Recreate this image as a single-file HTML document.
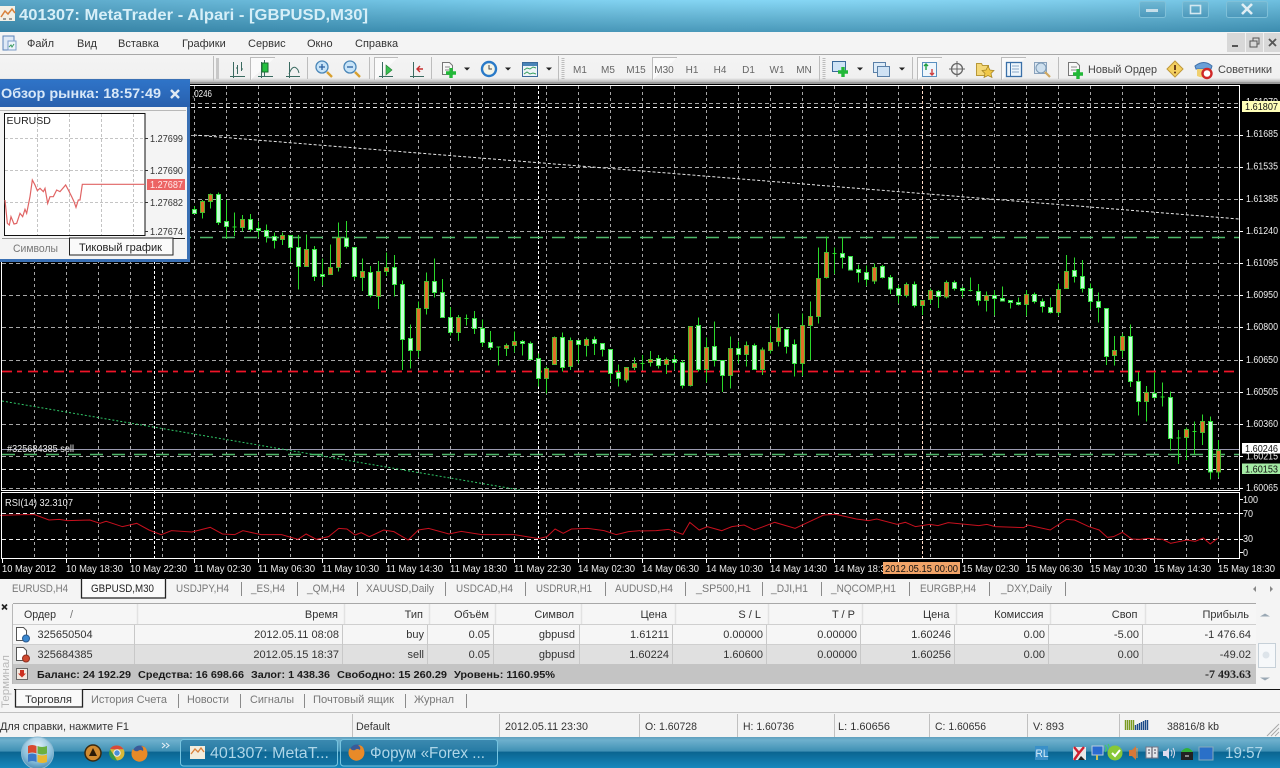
<!DOCTYPE html>
<html lang="ru"><head><meta charset="utf-8"><title>401307: MetaTrader - Alpari - [GBPUSD,M30]</title>
<style>
html,body{margin:0;padding:0;background:#000;width:1280px;height:768px;overflow:hidden}
svg{display:block}
text{font-family:"Liberation Sans","DejaVu Sans",sans-serif;font-size:11px;fill:#333}
.w text,text.w{fill:#eee;font-size:10px}
.g{fill:#777}
.d{fill:#666;font-size:10px}
.b{font-weight:bold;fill:#1a1a1a;font-size:10.5px}
.r{text-anchor:end}
.v{vector-effect:non-scaling-stroke}
.c path{vector-effect:non-scaling-stroke;shape-rendering:crispEdges}
.wk{fill:none;stroke:#2ad82a}
.be{fill:#c6ffd6;stroke:#34e040}
.bu{fill:#e07028;stroke:#50b830}
.ic{fill:none;stroke:#3a6a60;stroke-width:1}
</style></head><body>
<svg width="1280" height="768" viewBox="0 0 1280 768" xmlns="http://www.w3.org/2000/svg">
<defs>
<linearGradient id="tb" x1="0" y1="0" x2="0" y2="1"><stop offset="0" stop-color="#7fd4f4"/><stop offset=".45" stop-color="#63b6d6"/><stop offset="1" stop-color="#3f93b6"/></linearGradient>
<linearGradient id="tbh" x1="0" y1="0" x2="1" y2="0"><stop offset="0" stop-color="#2f6f90" stop-opacity=".45"/><stop offset=".35" stop-color="#2f6f90" stop-opacity=".12"/><stop offset=".6" stop-color="#fff" stop-opacity=".05"/><stop offset="1" stop-color="#2f6f90" stop-opacity=".2"/></linearGradient>
<linearGradient id="wb" x1="0" y1="0" x2="0" y2="1"><stop offset="0" stop-color="#6fb8d4"/><stop offset="1" stop-color="#4c98bb"/></linearGradient>
<linearGradient id="tk" x1="0" y1="0" x2="0" y2="1"><stop offset="0" stop-color="#5f9fbd"/><stop offset=".1" stop-color="#6eb0cd"/><stop offset=".46" stop-color="#3f90b4"/><stop offset=".48" stop-color="#0a6490"/><stop offset="1" stop-color="#1688bd"/></linearGradient>
<linearGradient id="pt" x1="0" y1="0" x2="0" y2="1"><stop offset="0" stop-color="#2f74c8"/><stop offset="1" stop-color="#2860ae"/></linearGradient>
<linearGradient id="tg" x1="0" y1="0" x2="0" y2="1"><stop offset="0" stop-color="#f4f4f4"/><stop offset=".85" stop-color="#f0f0f0"/><stop offset="1" stop-color="#b8b8b8"/></linearGradient>
<radialGradient id="orb" cx=".5" cy=".3" r=".75"><stop offset="0" stop-color="#e4f2fa"/><stop offset=".65" stop-color="#86bcd8"/><stop offset="1" stop-color="#3a80ac"/></radialGradient>
</defs>

<!-- chart area -->
<rect x="0" y="84" width="1280" height="495" fill="#000"/>
<path fill="none" stroke="#a6a6a6" stroke-dasharray="3 3" shape-rendering="crispEdges" d="M34.5 86V558M66.5 86V558M98.5 86V558M130.5 86V558M162.5 86V558M194.5 86V558M226.5 86V558M258.5 86V558M290.5 86V558M322.5 86V558M354.5 86V558M386.5 86V558M418.5 86V558M450.5 86V558M482.5 86V558M514.5 86V558M546.5 86V558M578.5 86V558M610.5 86V558M642.5 86V558M674.5 86V558M706.5 86V558M738.5 86V558M770.5 86V558M802.5 86V558M834.5 86V558M866.5 86V558M898.5 86V558M930.5 86V558M962.5 86V558M994.5 86V558M1026.5 86V558M1058.5 86V558M1090.5 86V558M1122.5 86V558M1154.5 86V558M1186.5 86V558M1218.5 86V558"/>
<path fill="none" stroke="#a6a6a6" stroke-dasharray="4 3" shape-rendering="crispEdges" d="M2 103.5H1239M2 135.5H1239M2 167.5H1239M2 199.5H1239M2 231.5H1239M2 263.5H1239M2 295.5H1239M2 327.5H1239M2 360.5H1239M2 392.5H1239M2 424.5H1239M2 456.5H1239M2 488.5H1239"/>
<path fill="none" stroke="#fff" stroke-dasharray="3 2" shape-rendering="crispEdges" d="M154.5 86V558M538.5 86V558"/>
<path fill="none" stroke="#ffdcc8" stroke-dasharray="3 2" shape-rendering="crispEdges" d="M922.5 86V558"/>
<path fill="none" stroke="#eee" stroke-dasharray="4 3" shape-rendering="crispEdges" d="M2 107.5H1239M2 469.5H1239M2 513.5H1239M2 539.5H1239"/>
<path fill="none" stroke="#4fb86a" stroke-width="1.6" stroke-dasharray="13 9" d="M2 237.5H1239M2 454.5H1239"/>
<path fill="none" stroke="#f01428" stroke-width="1.8" stroke-dasharray="10 5 5 6" d="M2 371.5H1239"/>
<path fill="none" stroke="#9a9ab0" shape-rendering="crispEdges" d="M2 449.5H1239"/>
<path fill="none" stroke="#e8e8e8" stroke-dasharray="3 2" d="M194 135L1239 219"/>
<path fill="none" stroke="#30c868" stroke-dasharray="2 2" d="M2 401L520 490"/>

<!-- candles A -->
<g class="c" transform="matrix(1 0 0 .33333 0 180)">
<path class="wk" d="M194.5 78V100M202.5 60V116M210.5 40V86M218.5 37V135M226.5 60V175M234.5 97V168M232.5 141h4M242.5 105V155M250.5 102V155M258.5 125V172M266.5 133V188M274.5 158V206M282.5 158V195M290.5 165V245M298.5 165V328M306.5 163V260M314.5 198V303M322.5 235V317M330.5 193V284M338.5 128V275M346.5 123V205M354.5 202V298M362.5 235V333M370.5 258V352M378.5 243V387M386.5 218V288M394.5 225V350M402.5 302V570M410.5 433V565M418.5 365V532M426.5 277V404M434.5 235V352M442.5 297V412M450.5 381V467M458.5 405V483M466.5 403V436M464.5 415h4M474.5 393V462M482.5 418V500M490.5 453V510M498.5 500V557M496.5 501h4M506.5 490V528M514.5 455V518M522.5 480V527M530.5 485V540M538.5 520V620"/>
<path class="be" d="M192.5 88h4V100h-4zM216.5 44h4V128h-4zM224.5 125h4V140h-4zM248.5 118h4V149h-4zM256.5 146h4V152h-4zM264.5 152h4V170h-4zM272.5 170h4V181h-4zM288.5 166h4V203h-4zM296.5 203h4V259h-4zM312.5 208h4V289h-4zM320.5 284h4V289h-4zM344.5 174h4V200h-4zM352.5 203h4V289h-4zM368.5 277h4V347h-4zM392.5 263h4V313h-4zM400.5 314h4V478h-4zM408.5 475h4V511h-4zM432.5 304h4V338h-4zM440.5 337h4V412h-4zM448.5 412h4V457h-4zM472.5 416h4V445h-4zM480.5 445h4V487h-4zM488.5 488h4V502h-4zM520.5 484h4V490h-4zM528.5 490h4V539h-4zM536.5 535h4V595h-4z"/>
<path class="bu" d="M200.5 64h4V97h-4zM208.5 44h4V65h-4zM240.5 118h4V143h-4zM280.5 166h4V178h-4zM304.5 209h4V260h-4zM328.5 263h4V284h-4zM336.5 172h4V263h-4zM360.5 275h4V292h-4zM376.5 274h4V349h-4zM384.5 262h4V275h-4zM416.5 385h4V511h-4zM424.5 304h4V386h-4zM456.5 412h4V457h-4zM504.5 496h4V506h-4zM512.5 484h4V496h-4z"/>
</g>
<!-- candles B -->
<g class="c" transform="matrix(1 0 0 .33333 0 220)">
<path class="wk" d="M546.5 440V520M554.5 350V433M562.5 337V455M570.5 352V450M578.5 360V430M586.5 352V410M594.5 350V405M602.5 370V410M610.5 388V485M618.5 433V500M626.5 441V488M634.5 412V450M642.5 405V450M640.5 430h4M650.5 393V440M658.5 405V445M666.5 412V462M674.5 405V450M682.5 420V505M690.5 318V500M698.5 292V455M706.5 352V487M714.5 304V440M722.5 421V516M730.5 349V505M738.5 365V430M746.5 365V440M754.5 370V450M762.5 382V465M770.5 316V400M778.5 280V380M786.5 327V400M794.5 358V470M802.5 280V468M810.5 244V420M818.5 82V310M826.5 50V175M834.5 82V162M832.5 101h4M842.5 52V145M850.5 108V152M858.5 133V188M866.5 136V198M874.5 130V192"/>
<path class="be" d="M560.5 352h4V443h-4zM576.5 361h4V374h-4zM592.5 358h4V371h-4zM600.5 371h4V388h-4zM608.5 389h4V460h-4zM616.5 457h4V476h-4zM656.5 415h4V437h-4zM672.5 418h4V428h-4zM680.5 428h4V497h-4zM696.5 317h4V449h-4zM712.5 379h4V421h-4zM720.5 422h4V466h-4zM736.5 386h4V403h-4zM752.5 376h4V449h-4zM784.5 328h4V380h-4zM792.5 374h4V431h-4zM840.5 100h4V112h-4zM848.5 110h4V150h-4zM856.5 148h4V158h-4zM864.5 157h4V179h-4z"/>
<path class="bu" d="M544.5 445h4V476h-4zM552.5 352h4V433h-4zM568.5 361h4V440h-4zM584.5 358h4V377h-4zM624.5 442h4V480h-4zM632.5 430h4V443h-4zM648.5 418h4V428h-4zM664.5 418h4V433h-4zM688.5 320h4V497h-4zM704.5 382h4V449h-4zM728.5 385h4V467h-4zM744.5 376h4V403h-4zM760.5 390h4V449h-4zM768.5 367h4V391h-4zM776.5 323h4V365h-4zM800.5 316h4V431h-4zM808.5 289h4V317h-4zM816.5 175h4V289h-4zM824.5 97h4V173h-4zM872.5 142h4V183h-4z"/>
</g>
<!-- candles C -->
<g class="c" transform="matrix(1 0 0 .33333 0 240)">
<path class="wk" d="M882.5 75V115M890.5 105V162M898.5 135V190M906.5 128V172M914.5 125V203M922.5 180V225M930.5 145V192M938.5 150V204M946.5 122V175M954.5 122V152M962.5 140V172M970.5 112V155M968.5 152h4M978.5 132V197M986.5 155V215M994.5 150V226M1002.5 140V185M1010.5 180V205M1018.5 172V197M1026.5 150V228M1034.5 158V190M1042.5 176V218M1050.5 172V220M1058.5 130V228M1066.5 45V147M1074.5 52V128M1082.5 60V158M1090.5 130V208M1098.5 158V248M1106.5 205V375M1114.5 288V377M1122.5 280V352M1130.5 254V441M1138.5 396V527M1146.5 438V545M1154.5 398V476M1162.5 428V500M1160.5 471h4M1170.5 455V631M1178.5 570V672M1176.5 594h4M1186.5 563V660M1194.5 545V643M1192.5 574h4M1202.5 523V615M1210.5 530V718M1218.5 600V712"/>
<path class="be" d="M880.5 80h4V113h-4zM888.5 112h4V147h-4zM896.5 145h4V167h-4zM912.5 133h4V197h-4zM936.5 155h4V170h-4zM952.5 127h4V146h-4zM960.5 146h4V152h-4zM976.5 155h4V182h-4zM992.5 167h4V176h-4zM1000.5 175h4V183h-4zM1008.5 182h4V187h-4zM1016.5 187h4V193h-4zM1032.5 163h4V185h-4zM1040.5 185h4V199h-4zM1048.5 203h4V218h-4zM1072.5 91h4V109h-4zM1080.5 110h4V145h-4zM1088.5 146h4V185h-4zM1096.5 184h4V203h-4zM1104.5 205h4V349h-4zM1128.5 289h4V425h-4zM1136.5 425h4V485h-4zM1152.5 460h4V472h-4zM1168.5 472h4V596h-4zM1208.5 545h4V696h-4z"/>
<path class="bu" d="M904.5 133h4V167h-4zM920.5 181h4V197h-4zM928.5 151h4V178h-4zM944.5 127h4V171h-4zM984.5 167h4V182h-4zM1024.5 163h4V193h-4zM1056.5 148h4V218h-4zM1064.5 94h4V146h-4zM1112.5 331h4V347h-4zM1120.5 289h4V331h-4zM1144.5 458h4V485h-4zM1184.5 568h4V592h-4zM1200.5 545h4V577h-4zM1216.5 632h4V696h-4z"/>
</g>

<!-- RSI line -->
<g fill="none" stroke="#c8101e">
<polyline class="v" transform="matrix(.40816 0 0 .33333 0 440)" points="0,226 60,224 85,224 120,240 145,238 165,242 220,240 245,250 260,244 300,260 335,250 365,270 395,284 420,272 470,276 515,262 545,282 575,284 595,272 640,284 690,284 730,298 750,282 775,298 805,290 830,265 850,267 870,285 885,278 905,290 940,270 965,275 1000,300 1025,270 1050,265 1100,282 1130,274 1180,284 1260,284 1320,296 1340,290 1360,267 1380,280 1400,267 1440,265 1480,272 1510,284 1540,275 1568,272"/>
<polyline class="v" transform="matrix(.40816 0 0 .33333 640 480)" points="0,153 40,152 70,148 105,163 122,127 145,150 165,140 200,152 225,140 255,135 280,150 330,127 380,145 415,125 450,105 480,103 530,117 560,122 580,117 630,133 650,127 675,140 710,133 730,137 755,128 830,137 850,133 870,140 940,143 950,135 1005,150 1045,118 1065,120 1100,140 1125,150 1145,172 1160,170 1182,157 1205,177 1225,178 1245,175 1280,178 1300,190 1340,180 1360,184 1380,174 1397,192 1415,175"/>
</g>

<!-- frames -->
<g fill="none" stroke="#fff" shape-rendering="crispEdges">
<rect x="1.5" y="85.5" width="1238" height="405"/>
<rect x="1.5" y="492.5" width="1238" height="66"/>
<path d="M2.5 559v4M66.5 559v4M130.5 559v4M194.5 559v4M258.5 559v4M322.5 559v4M386.5 559v4M450.5 559v4M514.5 559v4M578.5 559v4M642.5 559v4M706.5 559v4M770.5 559v4M834.5 559v4M898.5 559v4M962.5 559v4M1026.5 559v4M1090.5 559v4M1154.5 559v4M1218.5 559v4M1240 135.5h3M1240 167.5h3M1240 199.5h3M1240 231.5h3M1240 263.5h3M1240 295.5h3M1240 327.5h3M1240 360.5h3M1240 392.5h3M1240 424.5h3M1240 456.5h3M1240 488.5h3M1240 499.5h3M1240 513.5h3M1240 539.5h3M1240 552.5h3"/>
</g>

<!-- chart labels -->
<g class="w">
<text x="192" y="97" textLength="20" lengthAdjust="spacingAndGlyphs">,0246</text>
<text x="7" y="452" textLength="67" lengthAdjust="spacingAndGlyphs">#325684385 sell</text>
<text x="5" y="506" textLength="68" lengthAdjust="spacingAndGlyphs">RSI(14) 32.3107</text>
<text x="1246" y="105" textLength="32" lengthAdjust="spacingAndGlyphs">1.61979</text>
<text x="1246" y="137" textLength="32" lengthAdjust="spacingAndGlyphs">1.61685</text>
<text x="1246" y="169.5" textLength="32" lengthAdjust="spacingAndGlyphs">1.61535</text>
<text x="1246" y="202" textLength="32" lengthAdjust="spacingAndGlyphs">1.61385</text>
<text x="1246" y="234" textLength="32" lengthAdjust="spacingAndGlyphs">1.61240</text>
<text x="1246" y="266" textLength="32" lengthAdjust="spacingAndGlyphs">1.61095</text>
<text x="1246" y="298" textLength="32" lengthAdjust="spacingAndGlyphs">1.60950</text>
<text x="1246" y="330" textLength="32" lengthAdjust="spacingAndGlyphs">1.60800</text>
<text x="1246" y="363" textLength="32" lengthAdjust="spacingAndGlyphs">1.60650</text>
<text x="1246" y="395" textLength="32" lengthAdjust="spacingAndGlyphs">1.60505</text>
<text x="1246" y="427" textLength="32" lengthAdjust="spacingAndGlyphs">1.60360</text>
<text x="1246" y="459.5" textLength="32" lengthAdjust="spacingAndGlyphs">1.60215</text>
<text x="1246" y="491" textLength="32" lengthAdjust="spacingAndGlyphs">1.60065</text>
<text x="1243" y="503" textLength="15" lengthAdjust="spacingAndGlyphs">100</text>
<text x="1243" y="517" textLength="10" lengthAdjust="spacingAndGlyphs">70</text>
<text x="1243" y="542" textLength="10" lengthAdjust="spacingAndGlyphs">30</text>
<text x="1243" y="556" textLength="5" lengthAdjust="spacingAndGlyphs">0</text>
<text x="2" y="572" textLength="54" lengthAdjust="spacingAndGlyphs">10 May 2012</text>
<text x="66" y="572" textLength="57" lengthAdjust="spacingAndGlyphs">10 May 18:30</text>
<text x="130" y="572" textLength="57" lengthAdjust="spacingAndGlyphs">10 May 22:30</text>
<text x="194" y="572" textLength="57" lengthAdjust="spacingAndGlyphs">11 May 02:30</text>
<text x="258" y="572" textLength="57" lengthAdjust="spacingAndGlyphs">11 May 06:30</text>
<text x="322" y="572" textLength="57" lengthAdjust="spacingAndGlyphs">11 May 10:30</text>
<text x="386" y="572" textLength="57" lengthAdjust="spacingAndGlyphs">11 May 14:30</text>
<text x="450" y="572" textLength="57" lengthAdjust="spacingAndGlyphs">11 May 18:30</text>
<text x="514" y="572" textLength="57" lengthAdjust="spacingAndGlyphs">11 May 22:30</text>
<text x="578" y="572" textLength="57" lengthAdjust="spacingAndGlyphs">14 May 02:30</text>
<text x="642" y="572" textLength="57" lengthAdjust="spacingAndGlyphs">14 May 06:30</text>
<text x="706" y="572" textLength="57" lengthAdjust="spacingAndGlyphs">14 May 10:30</text>
<text x="770" y="572" textLength="57" lengthAdjust="spacingAndGlyphs">14 May 14:30</text>
<text x="834" y="572" textLength="57" lengthAdjust="spacingAndGlyphs">14 May 18:30</text>
<text x="962" y="572" textLength="57" lengthAdjust="spacingAndGlyphs">15 May 02:30</text>
<text x="1026" y="572" textLength="57" lengthAdjust="spacingAndGlyphs">15 May 06:30</text>
<text x="1090" y="572" textLength="57" lengthAdjust="spacingAndGlyphs">15 May 10:30</text>
<text x="1154" y="572" textLength="57" lengthAdjust="spacingAndGlyphs">15 May 14:30</text>
<text x="1218" y="572" textLength="57" lengthAdjust="spacingAndGlyphs">15 May 18:30</text>
</g>
<rect x="883" y="562" width="77" height="12" fill="#f2a468"/>
<text x="885" y="572" style="font-size:10px;fill:#111" textLength="73" lengthAdjust="spacingAndGlyphs">2012.05.15 00:00</text>
<rect x="1242" y="101" width="38" height="11" fill="#ffffb8"/>
<text x="1245" y="110" style="font-size:10px;fill:#111" textLength="33" lengthAdjust="spacingAndGlyphs">1.61807</text>
<rect x="1242" y="443" width="38" height="10.5" fill="#fff"/>
<text x="1245" y="452" style="font-size:10px;fill:#111" textLength="33" lengthAdjust="spacingAndGlyphs">1.60246</text>
<rect x="1242" y="463.5" width="38" height="10.5" fill="#a4eaa4"/>
<text x="1245" y="472.5" style="font-size:10px;fill:#111" textLength="33" lengthAdjust="spacingAndGlyphs">1.60153</text>

<!-- title bar -->
<rect width="1280" height="32" fill="url(#tb)"/>
<rect width="1280" height="32" fill="url(#tbh)"/>
<rect x="0" y="6" width="15" height="15" fill="#f2f0e6"/>
<path d="M1 17L5 11L8 14L12 9L15 13" fill="none" stroke="#d8803a" stroke-width="1.5"/>
<path d="M3 19h3M9 19h3" stroke="#444"/>
<text x="19" y="20" style="font-size:16px;font-weight:bold;fill:#d6eff8" textLength="349" lengthAdjust="spacingAndGlyphs">401307: MetaTrader - Alpari - [GBPUSD,M30]</text>
<rect x="1139.5" y="1.5" width="26" height="16" rx="2" fill="url(#wb)" stroke="#7fc0d8"/>
<rect x="1146" y="9" width="12" height="3" fill="#c6dfea"/>
<rect x="1182.5" y="1.5" width="26" height="16" rx="2" fill="url(#wb)" stroke="#7fc0d8"/>
<rect x="1190.5" y="5.5" width="10" height="8" fill="none" stroke="#d4e8f0" stroke-width="1.6"/>
<rect x="1226.5" y="1.5" width="41" height="16" rx="2" fill="url(#wb)" stroke="#7fc0d8"/>
<path d="M1242 4L1252 14M1252 4L1242 14" stroke="#e0eef4" stroke-width="2.6"/>

<!-- menu bar -->
<rect y="32" width="1280" height="22" fill="#f4f4f4"/>
<rect y="54" width="1280" height="1" fill="#a8a8a8"/>
<rect x="3" y="36" width="11" height="14" fill="#dfe9f6" stroke="#5a82b8"/>
<rect x="8" y="41" width="8" height="9" fill="#eef4fb" stroke="#7b9cc9"/>
<path d="M9 47l2-2 1 2 2-3" fill="none" stroke="#3a9a60"/>
<text x="27" y="47">Файл</text>
<text x="77" y="47">Вид</text>
<text x="118" y="47">Вставка</text>
<text x="182" y="47">Графики</text>
<text x="248" y="47">Сервис</text>
<text x="307" y="47">Окно</text>
<text x="355" y="47">Справка</text>
<rect x="1227" y="33" width="53" height="19" fill="#d8d8d8"/>
<path d="M1245.5 33v19M1263.5 33v19" stroke="#f2f2f2"/>
<rect x="1232" y="45" width="6" height="2" fill="#555"/>
<rect x="1250" y="41" width="7" height="6" fill="none" stroke="#555"/><path d="M1253 41v-3h6v6h-2" fill="none" stroke="#555"/>
<path d="M1269 39L1276 46M1276 39L1269 46" stroke="#555" stroke-width="1.8"/>

<!-- toolbar -->
<rect y="55" width="1280" height="27" fill="url(#tg)"/>
<rect y="82" width="1280" height="2" fill="#9a9a9a"/>
<rect x="216" y="58" width="3" height="21" fill="#c8c8c8"/>
<path d="M563 58v21M824 58v21" stroke="#bcbcbc" stroke-width="3" stroke-dasharray="1 1"/>
<path d="M213.5 56v25M307.5 57v22M369.5 57v22M431.5 57v22M558.5 56v25M819.5 56v25M912.5 57v22M1058.5 57v22" stroke="#bdbdbd"/>
<!-- highlighted boxes -->
<g fill="#fafafa" stroke="#bcbcbc" shape-rendering="crispEdges">
<path d="M250.5 80V57.5H275"/><path d="M374.5 80V57.5H398"/><path d="M652.5 80V57.5H677"/><path d="M917.5 80V57.5H942"/><path d="M1001.5 80V57.5H1026"/>
</g>
<!-- chart type icons -->
<g class="ic">
<path d="M230 76.5h15M233.5 62v16M237.5 65v9M236 68h1.5M241.5 62v9M241.5 69H243"/>
<path d="M258 76.5h15M261.5 62v16"/>
<path d="M264.5 60v17"/>
<path d="M286 76.5h14M289.5 62v16"/>
<path d="M289 74Q293 63 298 70l1 3"/>
<path d="M379 76.5h14M382.5 62v16M410 76.5h14M413.5 62v16"/>
</g>
<rect x="262" y="63" width="6" height="9" fill="#24c040" stroke="#1a6a30"/>
<path d="M386 65v10l6-5z" fill="#38c050" stroke="#207a30" stroke-width=".6"/>
<path d="M423 69h-6M420 66l-3 3 3 3" fill="none" stroke="#c83030" stroke-width="1.4"/>
<!-- zoom icons -->
<circle cx="322" cy="67" r="6" fill="#c8e4f8" stroke="#4a86b8" stroke-width="1.3"/>
<path d="M319 67h6M322 64v6" stroke="#2a60a0" stroke-width="1.3"/>
<path d="M327 72l5 5" stroke="#d8a030" stroke-width="2.4"/>
<circle cx="350" cy="67" r="6" fill="#c8e4f8" stroke="#4a86b8" stroke-width="1.3"/>
<path d="M347 67h6" stroke="#2a60a0" stroke-width="1.3"/>
<path d="M355 72l5 5" stroke="#d8a030" stroke-width="2.4"/>
<!-- new indicator -->
<path d="M442.5 62.5h7l3 3v9h-10z" fill="#f8f8f8" stroke="#777"/>
<path d="M445 67h5M445 70h4" stroke="#888"/>
<path d="M451 68v10M446 73h10" stroke="#22b838" stroke-width="3.4"/>
<!-- clock -->
<circle cx="489" cy="69" r="7" fill="#f4f4e8" stroke="#2a7ac8" stroke-width="2.4"/>
<path d="M489 65v4h3" fill="none" stroke="#444"/>
<!-- template -->
<rect x="522.5" y="62.5" width="15" height="14" fill="#eef4f8" stroke="#3a6a9a"/>
<rect x="523" y="63" width="14" height="3" fill="#4a84b8"/>
<path d="M524 70l3-2 3 1 3-2 3 1M524 74l3-2 3 2 3-1 3 1" fill="none" stroke="#38a060"/>
<!-- dropdown arrows -->
<g fill="#222"><path d="M464 67.5h6l-3 3zM505 67.5h6l-3 3zM546 67.5h6l-3 3zM857 67.5h6l-3 3zM899 67.5h6l-3 3z"/></g>
<!-- timeframes -->
<g>
<text class="d" x="580" y="73" text-anchor="middle">M1</text>
<text class="d" x="608" y="73" text-anchor="middle">M5</text>
<text class="d" x="636" y="73" text-anchor="middle">M15</text>
<text class="d" x="664" y="73" text-anchor="middle">M30</text>
<text class="d" x="692" y="73" text-anchor="middle">H1</text>
<text class="d" x="720" y="73" text-anchor="middle">H4</text>
<text class="d" x="748.5" y="73" text-anchor="middle">D1</text>
<text class="d" x="777" y="73" text-anchor="middle">W1</text>
<text class="d" x="804" y="73" text-anchor="middle">MN</text>
</g>
<!-- chart + -->
<rect x="832.5" y="61.5" width="13" height="10" fill="#cfe4f6" stroke="#3a6a9a"/>
<path d="M843 67v10M838 72h10" stroke="#22b838" stroke-width="3.4"/>
<!-- tile windows -->
<rect x="873.5" y="62.5" width="12" height="10" fill="#dcebf8" stroke="#5a80a8"/>
<rect x="877.5" y="66.5" width="12" height="10" fill="#cfe2f4" stroke="#5a80a8"/>
<!-- market watch -->
<rect x="922.5" y="62.5" width="14" height="14" fill="#eef6fc" stroke="#5a90c0"/>
<path d="M926 64v6M924 66l2-2 2 2" fill="none" stroke="#20a040" stroke-width="1.4"/>
<path d="M932 75v-6M930 73l2 2 2-2" fill="none" stroke="#d04040" stroke-width="1.4"/>
<!-- crosshair -->
<circle cx="957" cy="69" r="5.5" fill="none" stroke="#666" stroke-width="1.3"/>
<path d="M957 61v16M949 69h16" stroke="#666"/>
<!-- favourites -->
<path d="M976.5 63.5h5l1 2h6v10h-12z" fill="#f4d878" stroke="#b89838"/>
<path d="M988 66l2 4 4 .5-3 3 1 4-4-2-4 2 1-4-3-3 4-.5z" fill="#f0c848" stroke="#a08020" stroke-width=".7"/>
<!-- navigator -->
<rect x="1006.5" y="62.5" width="15" height="14" fill="#eef6fc" stroke="#3a70a8" stroke-width="1.3"/>
<path d="M1010.5 63v13" stroke="#3a70a8"/>
<path d="M1012 66h7M1012 69h7M1012 72h7" stroke="#8aa8c8"/>
<!-- terminal search -->
<rect x="1034.5" y="62.5" width="12" height="11" fill="#dde8f2" stroke="#8aa2bc"/>
<circle cx="1041" cy="68" r="5" fill="#cddfee" stroke="#7a98b4"/>
<path d="M1045 72l5 5" stroke="#d0a860" stroke-width="2.2"/>
<!-- new order -->
<path d="M1068.5 62.5h8l3 3v10h-11z" fill="#f8f8f8" stroke="#777"/>
<path d="M1071 67h6M1071 70h5" stroke="#888"/>
<path d="M1078 69v10M1073 74h10" stroke="#22b838" stroke-width="3.4"/>
<text x="1088" y="73" textLength="69" lengthAdjust="spacingAndGlyphs" style="fill:#444">Новый Ордер</text>
<path d="M1175 61l8 8-8 8-8-8z" fill="#f4d060" stroke="#c09838"/>
<path d="M1175 65v5" stroke="#603010" stroke-width="1.8"/><circle cx="1175" cy="72.5" r="1" fill="#603010"/>
<!-- experts -->
<path d="M1195 66q9-7 17 0l-1 3h-15z" fill="#6aa0d8" stroke="#4070a8"/>
<path d="M1197 69h12v7q-6 3-12 0z" fill="#f0d070"/>
<circle cx="1207" cy="73.5" r="4.5" fill="#fff" stroke="#d02828" stroke-width="2.4"/>
<text x="1218" y="73" textLength="54" lengthAdjust="spacingAndGlyphs" style="fill:#444">Советники</text>

<!-- market watch panel -->
<rect x="0" y="79" width="190" height="183" fill="#3a70b4"/>
<rect x="0" y="80" width="190" height="27" fill="url(#pt)"/>
<rect x="0" y="107" width="187" height="152" fill="#f4f4f4"/>
<rect x="0" y="110" width="186" height="1" fill="#b8b8b8"/>
<text x="1" y="98" style="font-size:14px;font-weight:bold;fill:#d8e8f8" textLength="160" lengthAdjust="spacingAndGlyphs">Обзор рынка: 18:57:49</text>
<path d="M171 90L179 98M179 90L171 98" stroke="#dfe8f2" stroke-width="2.4"/>
<rect x="4.5" y="113.5" width="140.5" height="122" fill="#fff" stroke="#111"/>
<path d="M37.5 114v121M69.5 114v121M101.5 114v121M133.5 114v121M5 138.5h140M5 170.5h140M5 202.5h140" stroke="#c4c4c4" stroke-dasharray="3 2" fill="none"/>
<text x="6.5" y="124" style="font-size:10.5px;fill:#222">EURUSD</text>
<polyline class="v" transform="scale(.33333)" fill="none" stroke="#e06464" stroke-width="1.2" points="15,600 22,670 28,675 33,650 42,672 50,670 60,640 68,650 75,628 80,640 90,590 97,540 105,555 112,572 120,565 130,575 135,565 143,610 150,590 160,590 170,570 180,575 197,555 205,570 215,590 222,605 228,622 235,600 240,600 247,553 435,553"/>
<path d="M145 138.5h3M145 170.5h3M145 202.5h3M145 231.5h3" stroke="#333"/>
<text x="150" y="142" style="font-size:10px" textLength="33" lengthAdjust="spacingAndGlyphs">1.27699</text>
<text x="150" y="174" style="font-size:10px" textLength="33" lengthAdjust="spacingAndGlyphs">1.27690</text>
<text x="150" y="206" style="font-size:10px" textLength="33" lengthAdjust="spacingAndGlyphs">1.27682</text>
<text x="150" y="235" style="font-size:10px" textLength="33" lengthAdjust="spacingAndGlyphs">1.27674</text>
<rect x="147" y="179" width="38" height="11" fill="#ec6464"/>
<text x="150" y="188" style="font-size:10px;fill:#ffe8e8" textLength="33" lengthAdjust="spacingAndGlyphs">1.27687</text>
<path d="M2 238.5h68" stroke="#9a9a9a"/>
<path d="M173 238.5h12" stroke="#222"/>
<rect x="69.5" y="238" width="103.5" height="17" fill="#fafafa" stroke="#222"/>
<text x="13" y="252" class="g" textLength="45" lengthAdjust="spacingAndGlyphs">Символы</text>
<text x="79" y="251" textLength="83" lengthAdjust="spacingAndGlyphs" style="font-size:11px;fill:#222">Тиковый график</text>

<!-- symbol tabs -->
<rect y="579" width="1280" height="24" fill="#f4f4f4"/>
<rect x="82" y="579" width="83" height="19" fill="#fafafa"/>
<path d="M81.5 578v20H165.5V578" fill="none" stroke="#222" stroke-width="1.3"/>
<path d="M241.5 582v14M297.5 582v14M357.5 582v14M445.5 582v14M525.5 582v14M605.5 582v14M685.5 582v14M762.5 582v14M821.5 582v14M909.5 582v14M989.5 582v14M1065.5 582v14" stroke="#8a8a8a"/>
<text class="g" x="12" y="592" textLength="56" lengthAdjust="spacingAndGlyphs">EURUSD,H4</text>
<text x="91" y="592" textLength="63" lengthAdjust="spacingAndGlyphs" style="fill:#222">GBPUSD,M30</text>
<text class="g" x="176" y="592" textLength="53" lengthAdjust="spacingAndGlyphs">USDJPY,H4</text>
<text class="g" x="251" y="592" textLength="34" lengthAdjust="spacingAndGlyphs">_ES,H4</text>
<text class="g" x="307" y="592" textLength="38" lengthAdjust="spacingAndGlyphs">_QM,H4</text>
<text class="g" x="366" y="592" textLength="68" lengthAdjust="spacingAndGlyphs">XAUUSD,Daily</text>
<text class="g" x="456" y="592" textLength="57" lengthAdjust="spacingAndGlyphs">USDCAD,H4</text>
<text class="g" x="536" y="592" textLength="56" lengthAdjust="spacingAndGlyphs">USDRUR,H1</text>
<text class="g" x="615" y="592" textLength="58" lengthAdjust="spacingAndGlyphs">AUDUSD,H4</text>
<text class="g" x="696" y="592" textLength="55" lengthAdjust="spacingAndGlyphs">_SP500,H1</text>
<text class="g" x="771" y="592" textLength="37" lengthAdjust="spacingAndGlyphs">_DJI,H1</text>
<text class="g" x="831" y="592" textLength="65" lengthAdjust="spacingAndGlyphs">_NQCOMP,H1</text>
<text class="g" x="920" y="592" textLength="56" lengthAdjust="spacingAndGlyphs">EURGBP,H4</text>
<text class="g" x="1001" y="592" textLength="51" lengthAdjust="spacingAndGlyphs">_DXY,Daily</text>
<path d="M1256 586v6l-3-3zM1270 586v6l3-3z" fill="#888"/>

<!-- terminal -->
<rect y="600" width="1280" height="113" fill="#f4f4f4"/>
<rect x="13" y="603" width="1243" height="1" fill="#a8a8a8"/>
<rect x="13" y="604" width="1243" height="21" fill="#f6f6f6"/>
<rect x="13" y="625" width="1243" height="19.5" fill="#f6f6f6"/>
<rect x="13" y="644.5" width="1243" height="19.5" fill="#e0e0e0"/>
<rect x="13" y="664" width="1243" height="20" fill="#c4c4c4"/>
<path d="M13 624.5h1243M13 644.5h1243" stroke="#cfcfcf"/>
<path d="M137.5 604v20M344.5 604v20M429.5 604v20M495.5 604v20M581.5 604v20M675.5 604v20M768.5 604v20M862.5 604v20M956.5 604v20M1050.5 604v20M1145.5 604v20" stroke="#e2e2e2" stroke-width="1.5"/>
<path d="M134.5 625v39M342.5 625v39M427.5 625v39M493.5 625v39M579.5 625v39M672.5 625v39M766.5 625v39M860.5 625v39M954.5 625v39M1048.5 625v39M1142.5 625v39" stroke="#c8c8c8"/>
<path d="M12.5 604v80" stroke="#b8b8b8"/>
<path d="M2 604.5L7 609.5M7 604.5L2 609.5" stroke="#222" stroke-width="1.7"/>
<text transform="translate(9,708) rotate(-90)" textLength="53" lengthAdjust="spacingAndGlyphs" style="font-size:11px;fill:#b8b8b8">Терминал</text>
<!-- header -->
<text x="24" y="618" textLength="32" lengthAdjust="spacingAndGlyphs">Ордер</text>
<text x="70" y="618" class="g">/</text>
<text class="r" x="338" y="618">Время</text><text class="r" x="423" y="618">Тип</text><text class="r" x="489" y="618">Объём</text><text class="r" x="574" y="618">Символ</text><text class="r" x="667" y="618">Цена</text><text class="r" x="761" y="618">S / L</text><text class="r" x="855" y="618">T / P</text><text class="r" x="949.5" y="618">Цена</text><text class="r" x="1043.5" y="618">Комиссия</text><text class="r" x="1137.5" y="618">Своп</text><text class="r" x="1249" y="618">Прибыль</text>
<!-- row icons -->
<path d="M16.5 627.5h7l3 3v10h-10z" fill="#fff" stroke="#555"/>
<circle cx="26" cy="638.5" r="3.5" fill="#3a88d0" stroke="#2a5a90"/>
<path d="M16.5 647.5h7l3 3v10h-10z" fill="#fff" stroke="#555"/>
<circle cx="26" cy="658.5" r="3.5" fill="#d04a30" stroke="#903020"/>
<rect x="16.5" y="668.5" width="11" height="11" fill="#f2e8e0" stroke="#666"/>
<path d="M20 670h4v3.5h2l-4 4-4-4h2z" fill="#cc3020"/>
<!-- rows -->
<text x="37.5" y="638">325650504</text>
<text x="37.5" y="658">325684385</text>
<text class="r" x="339" y="638">2012.05.11 08:08</text><text class="r" x="424" y="638">buy</text><text class="r" x="490" y="638">0.05</text><text class="r" x="575" y="638">gbpusd</text><text class="r" x="669" y="638">1.61211</text><text class="r" x="763" y="638">0.00000</text><text class="r" x="857" y="638">0.00000</text><text class="r" x="951" y="638">1.60246</text><text class="r" x="1045" y="638">0.00</text><text class="r" x="1139" y="638">-5.00</text><text class="r" x="1251" y="638">-1 476.64</text>
<text class="r" x="339" y="658">2012.05.15 18:37</text><text class="r" x="424" y="658">sell</text><text class="r" x="490" y="658">0.05</text><text class="r" x="575" y="658">gbpusd</text><text class="r" x="669" y="658">1.60224</text><text class="r" x="763" y="658">1.60600</text><text class="r" x="857" y="658">0.00000</text><text class="r" x="951" y="658">1.60256</text><text class="r" x="1045" y="658">0.00</text><text class="r" x="1139" y="658">0.00</text><text class="r" x="1251" y="658">-49.02</text>
<text class="b" x="37" y="678" textLength="94" lengthAdjust="spacingAndGlyphs">Баланс: 24 192.29</text>
<text class="b" x="138" y="678" textLength="106" lengthAdjust="spacingAndGlyphs">Средства: 16 698.66</text>
<text class="b" x="251" y="678" textLength="79" lengthAdjust="spacingAndGlyphs">Залог: 1 438.36</text>
<text class="b" x="337" y="678" textLength="110" lengthAdjust="spacingAndGlyphs">Свободно: 15 260.29</text>
<text class="b" x="454" y="678" textLength="101" lengthAdjust="spacingAndGlyphs">Уровень: 1160.95%</text>
<text class="r" x="1251" y="678" style="font-family:'Liberation Serif',serif;font-weight:bold;font-size:12px;fill:#222">-7 493.63</text>
<!-- scrollbar -->
<path d="M1260 616.5l5-3 5 3z" fill="#9aa8b4"/>
<rect x="1258.5" y="643.5" width="17" height="24" fill="#f6f8fa" stroke="#c6d0d8"/>
<circle cx="1266" cy="655" r="3.5" fill="#dde4ea"/>
<path d="M1260 677.5l5 3 5-3z" fill="#9aa8b4"/>
<!-- bottom tabs -->
<path d="M14 689.5H1280" stroke="#111"/>
<rect x="15.5" y="689.5" width="67" height="17.5" fill="#fafafa"/>
<path d="M15.5 689v18H82.5V689" fill="none" stroke="#222" stroke-width="1.3"/>
<path d="M178.5 694v14M240.5 694v14M304.5 694v14M405.5 694v14M466.5 694v14" stroke="#8a8a8a"/>
<text x="25" y="703" textLength="47" lengthAdjust="spacingAndGlyphs">Торговля</text>
<text class="g" x="91" y="703" textLength="76" lengthAdjust="spacingAndGlyphs">История Счета</text>
<text class="g" x="187" y="703" textLength="42" lengthAdjust="spacingAndGlyphs">Новости</text>
<text class="g" x="250" y="703" textLength="44" lengthAdjust="spacingAndGlyphs">Сигналы</text>
<text class="g" x="313" y="703" textLength="81" lengthAdjust="spacingAndGlyphs">Почтовый ящик</text>
<text class="g" x="414" y="703" textLength="40" lengthAdjust="spacingAndGlyphs">Журнал</text>

<!-- status bar -->
<rect y="712" width="1280" height="25" fill="#f3f3f3"/>
<rect y="712" width="1280" height="1" fill="#c0c0c0"/>
<path d="M352.5 714v23M499.5 714v23M639.5 714v23M737.5 714v23M834.5 714v23M929.5 714v23M1027.5 714v23M1119.5 714v23" stroke="#c0c0c0"/>
<text x="0" y="730" textLength="129" lengthAdjust="spacingAndGlyphs">Для справки, нажмите F1</text>
<text x="356" y="730" textLength="34" lengthAdjust="spacingAndGlyphs">Default</text>
<text x="505" y="730" textLength="83" lengthAdjust="spacingAndGlyphs">2012.05.11 23:30</text>
<text x="645" y="730" textLength="52" lengthAdjust="spacingAndGlyphs">O: 1.60728</text>
<text x="743" y="730" textLength="51" lengthAdjust="spacingAndGlyphs">H: 1.60736</text>
<text x="838" y="730" textLength="52" lengthAdjust="spacingAndGlyphs">L: 1.60656</text>
<text x="935" y="730" textLength="51" lengthAdjust="spacingAndGlyphs">C: 1.60656</text>
<text x="1033" y="730" textLength="31" lengthAdjust="spacingAndGlyphs">V: 893</text>
<text x="1167" y="730" textLength="52" lengthAdjust="spacingAndGlyphs">38816/8 kb</text>
<path d="M1125.5 720v10M1127.5 720v10M1129.5 720v10M1131.5 720v10M1133.5 720v10" stroke="#7a9a20" stroke-width="1.4"/>
<path d="M1135.5 725v5M1137.5 724v6M1139.5 723v7M1141.5 722v8M1143.5 721v9M1145.5 720v10M1147.5 720v10" stroke="#1a4a88" stroke-width="1.4"/>
<path d="M1267 736l12-12M1271 736l8-8M1275 736l4-4" stroke="#a8a8a8"/>

<!-- taskbar -->
<rect y="737" width="1280" height="31" fill="url(#tk)"/>
<circle cx="37.5" cy="753" r="16" fill="url(#orb)" stroke="#8ab8d0"/>
<path d="M28 746q4-2 8.5 0v7.5q-4.5-2-8.5 0z" fill="#d84a30"/>
<path d="M37.5 746q4.5 2 9.500 0v7.5q-5 2-9.5 0z" fill="#6ab040"/>
<path d="M28 754.5q4-2 8.5 0v7.5q-4.5-2-8.5 0z" fill="#3a78c8"/>
<path d="M37.5 754.5q4.5 2 9.5 0v7.5q-5 2-9.5 0z" fill="#e8b830"/>
<circle cx="93" cy="753" r="8" fill="#d08a30" stroke="#3a2a10" stroke-width="1.5"/>
<path d="M93 748l4 8h-8z" fill="#2a1a08"/>
<circle cx="117" cy="753" r="7.5" fill="#d8b838"/>
<path d="M117 745.5a7.5 7.5 0 0 1 6.5 3.8h-6.5z" fill="#d84a38"/><path d="M110 749a7.5 7.5 0 0 1 7-3.5v4z" fill="#d84a38"/>
<path d="M117 760.5a7.5 7.5 0 0 1-7-11l4 6z" fill="#3a9a48"/>
<circle cx="117" cy="753" r="3.2" fill="#4a90d8" stroke="#eee"/>
<circle cx="140" cy="753" r="7.5" fill="#3a5a98"/>
<path d="M133 749a8 8 0 1 0 14 2q-1-5-6-5 3 2 2 5-3-2-5 0-3 1-5-2z" fill="#e88a28"/>
<path d="M162 743l3 2.5-3 2.5M166 743l3 2.5-3 2.5" fill="none" stroke="#e4eef4" stroke-width="1.1"/>
<rect x="180.5" y="739.5" width="157" height="26.5" rx="3" fill="#136a98" fill-opacity=".55" stroke="#76c4e0"/>
<rect x="190" y="746" width="15" height="13" fill="#f2ecdc"/>
<path d="M191 754l4-5 3 3 3-4 3 4" fill="none" stroke="#d8803a" stroke-width="1.3"/>
<text x="210" y="758" style="font-size:15.5px;fill:#aed6e8" textLength="119" lengthAdjust="spacingAndGlyphs">401307: MetaT...</text>
<rect x="340.5" y="739.5" width="157" height="26.5" rx="3" fill="#136a98" fill-opacity=".55" stroke="#76c4e0"/>
<circle cx="357" cy="752" r="7.5" fill="#3a5a98"/>
<path d="M350 748a8 8 0 1 0 14 2q-1-5-6-5 3 2 2 5-3-2-5 0-3 1-5-2z" fill="#e88a28"/>
<text x="370" y="758" style="font-size:15.5px;fill:#aed6e8" textLength="115" lengthAdjust="spacingAndGlyphs">Форум «Forex ...</text>
<!-- tray -->
<rect x="1035" y="746" width="13" height="14" fill="#3a90c8"/>
<text x="1035.5" y="757" style="font-size:11px;fill:#d8ecf8" textLength="13" lengthAdjust="spacingAndGlyphs">RL</text>
<rect x="1073" y="747" width="13" height="13" fill="#e8e8e8"/>
<path d="M1074 747l5 6 5-6M1074 760l5-7" fill="none" stroke="#d02030" stroke-width="2.4"/><path d="M1081 756l4 4h-7z" fill="#222"/>
<rect x="1092" y="746" width="11" height="9" fill="#2a6ad0" stroke="#bcd"/><path d="M1097 755v5" stroke="#c8c060" stroke-width="2"/><path d="M1105 745q3 4 0 7M1108 744q3 5 0 9" fill="none" stroke="#40d060"/>
<circle cx="1115" cy="753" r="7.5" fill="#88c838"/><path d="M1112 753l3 3 5-6" fill="none" stroke="#fff" stroke-width="2"/>
<path d="M1129 750h3l4-4v14l-4-4h-3z" fill="#d87838"/><path d="M1137 748v10" stroke="#f0a050"/>
<rect x="1146" y="747" width="12" height="11" fill="#e4e8ec" stroke="#778"/><path d="M1152 747v11M1148 750h2M1154 750h2M1148 753h2M1154 753h2" stroke="#445"/>
<path d="M1163 751h3l3-3v11l-3-3h-3z" fill="#dde"/><path d="M1171 750q2 3 0 6M1173 748q3 5 0 10" fill="none" stroke="#dde"/>
<rect x="1181" y="752" width="12" height="8" fill="#222"/><path d="M1181 752q6-8 12 0z" fill="#30b038"/><path d="M1185 756h4" stroke="#eee"/>
<rect x="1199" y="747" width="14" height="13" fill="#2a70c8" stroke="#8ab"/>
<text x="1225" y="758" style="font-size:16px;fill:#aed6e8" textLength="38" lengthAdjust="spacingAndGlyphs">19:57</text>
</svg>
</body></html>
